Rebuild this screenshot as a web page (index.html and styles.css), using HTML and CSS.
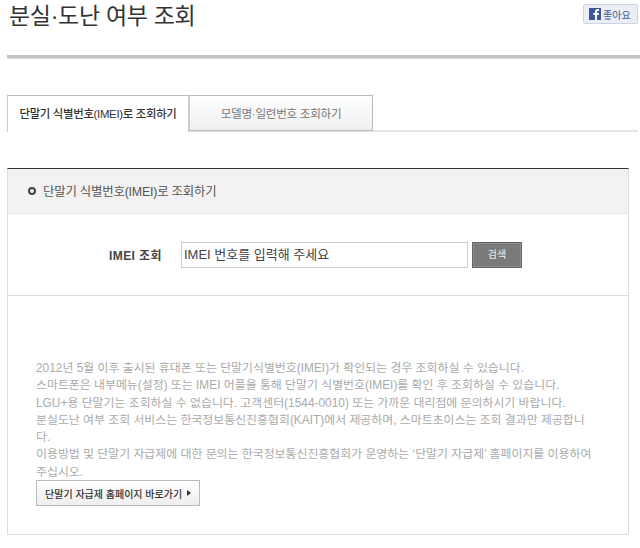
FILE: index.html
```html
<!DOCTYPE html>
<html lang="ko">
<head>
<meta charset="utf-8">
<title>분실·도난 여부 조회</title>
<link rel="stylesheet" href="styles.css">
</head>
<body>
<header class="top">
  <h1 class="title">분실·도난 여부 조회</h1>
  <a class="like"><svg class="fb" width="12" height="12" viewBox="0 0 12 12"><rect width="12" height="12" fill="#3b5998"/><path d="M8 12V7h1.700l.3-2H8V4c0-.6.2-1 1-1h1V1.200C9.700 1.100 9.200 1 8.600 1 7 1 6 2 6 3.700V5H4.300v2H6v5z" fill="#fff"/></svg><span>좋아요</span></a>
</header>
<div class="rule"></div>
<nav class="tabs">
  <div class="tab active">단말기 식별번호(IMEI)로 조회하기</div>
  <div class="tab">모델명·일련번호 조회하기</div>
</nav>
<main class="panel">
  <div class="panel-head"><i class="bullet"></i><h2>단말기 식별번호(IMEI)로 조회하기</h2></div>
  <form class="search">
    <label class="search-label">IMEI 조회</label>
    <div class="input">IMEI 번호를 입력해 주세요</div>
    <div class="btn-search">검색</div>
  </form>
  <section class="notes">
    <p>2012년 5월 이후 출시된 휴대폰 또는 단말기식별번호(IMEI)가 확인되는 경우 조회하실 수 있습니다.<br>
    스마트폰은 내부메뉴(설정) 또는 IMEI 어플을 통해 단말기 식별번호(IMEI)를 확인 후 조회하실 수 있습니다.<br>
    LGU+용 단말기는 조회하실 수 없습니다. 고객센터(1544-0010) 또는 가까운 대리점에 문의하시기 바랍니다.<br>
    분실도난 여부 조회 서비스는 한국정보통신진흥협회(KAIT)에서 제공하며, 스마트초이스는 조회 결과만 제공합니다.<br>
    이용방법 및 단말기 자급제에 대한 문의는 한국정보통신진흥협회가 운영하는 ‘단말기 자급제’ 홈페이지를 이용하여 주십시오.</p>
    <a class="btn-link">단말기 자급제 홈페이지 바로가기<i class="arrow"></i></a>
  </section>
</main>
</body>
</html>
```
FILE: styles.css
```css
* { box-sizing: border-box; }
html, body { margin: 0; padding: 0; }
body {
  width: 640px;
  height: 548px;
  overflow: hidden;
  background: #fff;
  font-family: "Liberation Sans", "Noto Sans CJK KR", sans-serif;
  color: #333;
}
.top {
  display: flex;
  justify-content: space-between;
  align-items: flex-start;
  height: 55px;
  padding: 3px 2px 0 9px;
}
.title {
  margin: 0;
  font-size: 23px;
  line-height: 27px;
  font-weight: 400;
  color: #333;
  letter-spacing: -0.3px;
}
.like {
  display: flex;
  align-items: center;
  gap: 2px;
  width: 55px;
  height: 20px;
  margin-top: 1px;
  padding-left: 5px;
  background: #eceef5;
  border: 1px solid #cad4e7;
  border-radius: 2px;
  font-size: 10px;
  color: #3b5998;
}
.fb { flex: none; }
.rule {
  height: 4px;
  margin-left: 7px;
  background: #c4c4c4;
  border-bottom: 1px solid #d8d8d8;
}
.tabs {
  display: flex;
  height: 37px;
  margin: 36px 2px 0 7px;
  border-bottom: 2px solid #e4e4e4;
}
.tab {
  width: 183px;
  height: 36px;
  border: 1px solid #bbb;
  border-left: 0;
  background: linear-gradient(#fff, #efefef);
  font-size: 11.6px;
  line-height: 36px;
  text-align: center;
  color: #777;
  letter-spacing: -0.3px;
}
.tab.active {
  height: 37px;
  border-left: 1px solid #ccc;
  border-right: 2px solid #ccc;
  border-bottom: 0;
  background: #fff;
  font-size: 11.4px;
  font-weight: 500;
  color: #333;
}
.panel {
  width: 622px;
  height: 367px;
  margin: 36px 0 0 7px;
  border: 1px solid #ddd;
  border-top: 1px solid #333;
}
.panel-head {
  display: flex;
  align-items: center;
  gap: 7px;
  height: 45px;
  padding-left: 20px;
  background: #f2f2f2;
  border-bottom: 1px solid #e8e8e8;
}
.panel-head h2 {
  margin: 0;
  font-size: 12.4px;
  font-weight: 400;
  color: #555;
  letter-spacing: -0.2px;
}
.bullet {
  width: 8px;
  height: 8px;
  border: 2px solid #444;
  border-radius: 50%;
}
.search {
  display: flex;
  align-items: center;
  height: 82px;
  padding-left: 101px;
  border-bottom: 1px solid #ddd;
}
.search-label {
  width: 72px;
  font-size: 12px;
  font-weight: 700;
  color: #444;
  letter-spacing: 0.4px;
}
.input {
  width: 287px;
  height: 26px;
  padding-left: 2px;
  border: 1px solid #ccc;
  font-size: 13px;
  line-height: 24px;
  color: #444;
}
.btn-search {
  width: 50px;
  height: 26px;
  margin-left: 4px;
  background: #7a7a7a;
  border: 1px solid #666;
  box-shadow: inset 0 0 0 1px #8c8c8c;
  font-size: 10px;
  line-height: 24px;
  text-align: center;
  color: #eee;
}
.notes { padding: 64px 32px 0 28px; }
.notes p {
  margin: 0;
  height: 120px;
  font-size: 11.9px;
  line-height: 17.3px;
  color: #aaa;
}
.btn-link {
  display: flex;
  align-items: center;
  width: 164px;
  height: 26px;
  padding-left: 8px;
  background: linear-gradient(#fff, #eee);
  border: 1px solid #bbb;
  font-size: 10px;
  font-weight: 500;
  color: #333;
  white-space: nowrap;
}
.arrow {
  margin-left: 5px;
  border-left: 4px solid #333;
  border-top: 3px solid transparent;
  border-bottom: 3px solid transparent;
}
```
